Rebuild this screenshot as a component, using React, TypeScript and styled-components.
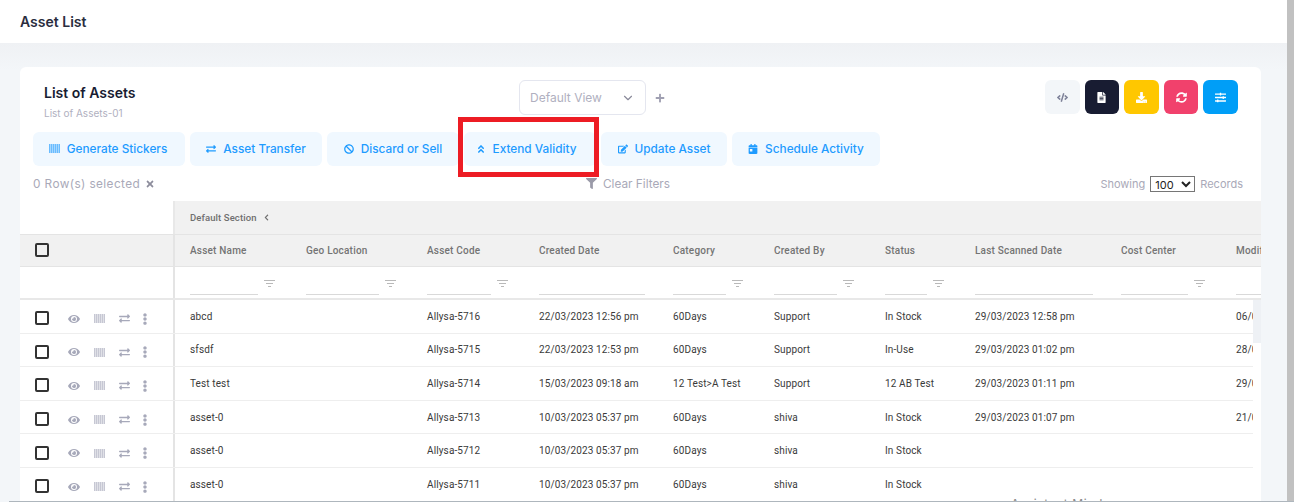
import React from "react";
import styled, { createGlobalStyle } from "styled-components";
import {
  FaExchangeAlt, FaBan, FaAngleDoubleUp, FaEdit, FaCalendarDay, FaEye, FaEllipsisV,
  FaCode, FaFileAlt, FaDownload, FaSyncAlt, FaSlidersH, FaFilter, FaTimes, FaChevronLeft, FaPlus,
} from "react-icons/fa";
import { ChevronDown } from "lucide-react";

const Global = createGlobalStyle`
  html, body { margin: 0; padding: 0; background: #f3f6f9; overflow: hidden; }
  * { box-sizing: border-box; }
`;

const UI_FONT = `"Inter", "Open Sans", sans-serif`;
const TABLE_FONT = `"Roboto", "Liberation Sans", sans-serif`;
const COLS = "154px 116px 121px 112px 134px 101px 111px 90px 146px 115px 100px";

const Page = styled.div`
  width: 1294px; height: 502px; display: flex; overflow: hidden; position: relative;
  font-family: ${UI_FONT};
`;
const Main = styled.div`
  width: 1287px; height: 501px; display: flex; flex-direction: column; overflow: hidden;
  background: linear-gradient(180deg, #eff1f4 43px, #f3f6f9 70px);
`;
const ScrollBar = styled.div`
  width: 7px; height: 501px; background: #c1c1c1;
`;
const BottomLine = styled.div`
  position: absolute; left: 9px; right: 0; bottom: 0; height: 1px; background: #aeb6bd;
`;
const FooterGhost = styled.div`
  position: absolute; left: 1011px; top: 496px; font-size: 12px; color: #8a8a8a; white-space: nowrap;
  font-family: ${UI_FONT}; letter-spacing: .6px;
`;
const TopBar = styled.header`
  flex: 0 0 43px; background: #fff; display: flex; align-items: center; padding: 0 20px 1px;
  font-size: 14px; font-weight: 600; color: #2a2d3e;
`;
const Content = styled.div`
  flex: 1; padding: 24px 26px 0 20px; min-height: 0;
`;
const Card = styled.section`
  background: #fff; border-radius: 6px 6px 0 0; height: 100%; display: flex; flex-direction: column; overflow: hidden;
`;
const CardHead = styled.div`
  display: flex; align-items: flex-start; padding: 13px 23px 0 24px; height: 65px;
`;
const TitleBlock = styled.div`
  width: 475px; padding-top: 4px;
`;
const Title = styled.div`
  font-size: 14px; font-weight: 600; color: #181c32; line-height: 18px;
`;
const Subtitle = styled.div`
  font-size: 10px; color: #b0b0c0; line-height: 12px; margin-top: 5px;
`;
const ViewSelect = styled.div`
  width: 127px; height: 35px; border: 1px solid #e4e6ef; border-radius: 6px;
  display: flex; align-items: center; justify-content: space-between; padding: 0 10px;
  font-size: 12px; color: #b0b0c0;
`;
const PlusBtn = styled.span`
  margin-left: 9px; height: 35px; display: flex; align-items: center; color: #a0a0b2; font-size: 10px;
`;
const Actions = styled.div`
  margin-left: auto; display: flex; gap: 5px;
`;
const Square = styled.button<{ $bg: string; $fg: string }>`
  width: 34.6px; height: 34px; border: 0; border-radius: 6px; padding: 0;
  background: ${(p) => p.$bg}; color: ${(p) => p.$fg};
  display: flex; align-items: center; justify-content: center; font-size: 11px;
`;
const Toolbar = styled.div`
  display: flex; gap: 5px; padding-left: 13px; height: 34px; flex: 0 0 34px;
`;
const ToolButton = styled.button<{ $w: number; $nudge?: number }>`
  position: relative; width: ${(p) => p.$w}px; height: 34px; border: 0; border-radius: 6px;
  background: #f0f8ff; color: #1e9bff; font-family: ${UI_FONT}; font-size: 11.8px; font-weight: 500;
  display: flex; align-items: center; justify-content: center; gap: 7px;
  padding: 0 ${(p) => p.$nudge ?? 0}px 0 0; white-space: nowrap;
  svg { font-size: 10px; flex: none; }
`;
const Highlight = styled.span`
  position: absolute; left: -6px; top: -15px; width: 141px; height: 60px; border: 5px solid #ed1c24;
  pointer-events: none;
`;
const StatusRow = styled.div`
  display: grid; grid-template-columns: 553px 1fr auto; align-items: center;
  padding: 0 18px 0 13px; height: 35px; flex: 0 0 35px; font-size: 11.8px; color: #a9a9b8;
`;
const Selected = styled.div`
  display: flex; align-items: center; gap: 5px; letter-spacing: .4px;
  svg { font-size: 10px; color: #8d8d9c; }
`;
const ClearFilters = styled.div`
  display: flex; align-items: center; gap: 6px;
  svg { font-size: 11px; color: #9a9aa8; }
`;
const Showing = styled.div`
  display: flex; align-items: center; gap: 5px; font-size: 11px;
`;
const Native = styled.select`
  width: 45px; height: 16px; font-family: ${UI_FONT}; font-size: 11px; color: #222; background: #fff;
  border: 1px solid #767676; padding: 0; border-radius: 0;
`;
const Table = styled.div`
  flex: 1; min-height: 0; display: flex; flex-direction: column; font-family: ${TABLE_FONT}; overflow: hidden;
`;
const SectionRow = styled.div`
  display: flex; height: 33px; flex: none;
`;
const SectionBlank = styled.div`
  width: 155px; border-right: 2px solid #e8e8e8;
`;
const SectionCell = styled.div`
  flex: 1; background: #f1f1f1; display: flex; align-items: center; gap: 6px; padding-left: 15px;
  font-size: 9.5px; font-weight: 500; color: #6f6f6f; letter-spacing: .1px;
  svg { font-size: 7px; }
`;
const HeadRow = styled.div`
  display: grid; grid-template-columns: ${COLS}; height: 33px; flex: none; background: #f1f1f1;
  border-top: 1px solid #e4e4e4; border-bottom: 1px solid #e4e4e4; overflow: hidden;
`;
const HeadCell = styled.div`
  display: flex; align-items: center; padding-left: 16px; font-size: 10px; font-weight: 500;
  color: #747474; letter-spacing: .2px; white-space: nowrap; overflow: hidden;
`;
const LeadCell = styled.div`
  width: 155px; display: flex; align-items: center; padding-left: 15px; border-right: 2px solid #e4e4e4; gap: 19px;
`;
const Check = styled.span`
  width: 14px; height: 14px; border: 2px solid #333; border-radius: 2px; flex: none; background: #fff;
`;
const HeadCheck = styled(Check)`
  background: transparent; margin-top: -2px;
`;
const FilterRow = styled.div`
  display: grid; grid-template-columns: ${COLS}; height: 33px; flex: none; overflow: hidden;
  border-bottom: 2px solid #e8e8e8;
`;
const FilterCell = styled.div`
  display: flex; align-items: flex-start; gap: 6px; padding: 0 12px 0 16px; overflow: hidden;
`;
const FilterInput = styled.div`
  flex: 1; height: 28px; border-bottom: 1px solid #d9d9d9;
`;
const FilterIcon = styled.svg`
  width: 11px; height: 8px; flex: none; margin-top: 13px; margin-right: 3px;
`;
const Body = styled.div`
  flex: 1; min-height: 0; display: flex;
`;
const Rows = styled.div`
  width: 1233px; overflow: hidden;
`;
const Track = styled.div`
  width: 8px;
`;
const Thumb = styled.div`
  height: 43px; background: #eef1f5;
`;
const Row = styled.div`
  display: grid; grid-template-columns: ${COLS}; height: 33.6px; border-bottom: 1px solid #eeeeee; overflow: hidden;
`;
const Cell = styled.div`
  display: flex; align-items: center; padding: 0 0 0 16px; font-size: 10px; color: #3a3a3a;
  white-space: nowrap; overflow: hidden; letter-spacing: .12px;
`;
const RowIcons = styled.div`
  display: flex; align-items: center; color: #a7a9ba; margin-top: 1px;
`;
const RowIcon = styled.span<{ $w: number; $s?: number }>`
  width: ${(p) => p.$w}px; display: flex; align-items: center; justify-content: flex-start;
  font-size: ${(p) => p.$s ?? 12}px;
`;
const RowLead = styled(LeadCell)`
  padding-top: 4px;
`;

const Barcode = ({ size = 11, color = "currentColor" }: { size?: number; color?: string }) => (
  <svg width={size} height={size * 0.82} viewBox="0 0 11 9" fill={color} style={{ display: "block" }}>
    <rect x="0" y="0" width="11" height="9" opacity=".35" />
    {[0, 2, 4, 6, 8, 10].map((x) => (
      <rect key={x} x={x} y="0" width="1" height="9" opacity=".45" />
    ))}
  </svg>
);

const FilterGlyph = () => (
  <FilterIcon viewBox="0 0 11 8" fill="none" stroke="#b9b9b9" strokeWidth="1">
    <path d="M0 .5h11M2 3.5h7M4 6.5h3" />
  </FilterIcon>
);

const HEAD = ["Asset Name", "Geo Location", "Asset Code", "Created Date", "Category", "Created By", "Status", "Last Scanned Date", "Cost Center", "Modified Date"];
const HAS_FILTER = [true, true, true, false, true, true, true, false, true, false];

const DATA = [
  ["abcd", "", "Allysa-5716", "22/03/2023 12:56 pm", "60Days", "Support", "In Stock", "29/03/2023 12:58 pm", "", "06/04/2023"],
  ["sfsdf", "", "Allysa-5715", "22/03/2023 12:53 pm", "60Days", "Support", "In-Use", "29/03/2023 01:02 pm", "", "28/03/2023"],
  ["Test test", "", "Allysa-5714", "15/03/2023 09:18 am", "12 Test>A Test", "Support", "12 AB Test", "29/03/2023 01:11 pm", "", "29/03/2023"],
  ["asset-0", "", "Allysa-5713", "10/03/2023 05:37 pm", "60Days", "shiva", "In Stock", "29/03/2023 01:07 pm", "", "21/03/2023"],
  ["asset-0", "", "Allysa-5712", "10/03/2023 05:37 pm", "60Days", "shiva", "In Stock", "", "", ""],
  ["asset-0", "", "Allysa-5711", "10/03/2023 05:37 pm", "60Days", "shiva", "In Stock", "", "", ""],
];

export default function App() {
  return (
    <Page>
      <Global />
      <Main>
        <TopBar>Asset List</TopBar>
        <Content>
          <Card>
            <CardHead>
              <TitleBlock>
                <Title>List of Assets</Title>
                <Subtitle>List of Assets-01</Subtitle>
              </TitleBlock>
              <ViewSelect>
                Default View
                <ChevronDown size={14} color="#8a8a9a" />
              </ViewSelect>
              <PlusBtn><FaPlus /></PlusBtn>
              <Actions>
                <Square $bg="#f3f6f9" $fg="#7e8299"><FaCode /></Square>
                <Square $bg="#181c32" $fg="#fff"><FaFileAlt /></Square>
                <Square $bg="#ffc700" $fg="#fff"><FaDownload /></Square>
                <Square $bg="#f1416c" $fg="#fff"><FaSyncAlt /></Square>
                <Square $bg="#009ef7" $fg="#fff"><FaSlidersH /></Square>
              </Actions>
            </CardHead>
            <Toolbar>
              <ToolButton $w={152} $nudge={2}><Barcode size={11} />Generate Stickers</ToolButton>
              <ToolButton $w={132}><FaExchangeAlt />Asset Transfer</ToolButton>
              <ToolButton $w={132}><FaBan />Discard or Sell</ToolButton>
              <ToolButton $w={132} $nudge={8}><FaAngleDoubleUp />Extend Validity<Highlight /></ToolButton>
              <ToolButton $w={126}><FaEdit />Update Asset</ToolButton>
              <ToolButton $w={148}><FaCalendarDay />Schedule Activity</ToolButton>
            </Toolbar>
            <StatusRow>
              <Selected>0 Row(s) selected <FaTimes /></Selected>
              <ClearFilters><FaFilter />Clear Filters</ClearFilters>
              <Showing>
                Showing
                <Native defaultValue="100"><option>100</option><option>50</option></Native>
                Records
              </Showing>
            </StatusRow>
            <Table>
              <SectionRow>
                <SectionBlank />
                <SectionCell>Default Section <FaChevronLeft /></SectionCell>
              </SectionRow>
              <HeadRow>
                <LeadCell><HeadCheck /></LeadCell>
                {HEAD.map((h) => <HeadCell key={h}>{h}</HeadCell>)}
              </HeadRow>
              <FilterRow>
                <LeadCell />
                {HEAD.map((h, i) => (
                  <FilterCell key={h}>
                    <FilterInput />
                    {HAS_FILTER[i] && <FilterGlyph />}
                  </FilterCell>
                ))}
              </FilterRow>
              <Body>
                <Rows>
                  {DATA.map((r, i) => (
                    <Row key={i}>
                      <RowLead>
                        <Check />
                        <RowIcons>
                          <RowIcon $w={26}><FaEye /></RowIcon>
                          <RowIcon $w={25}><Barcode size={11} /></RowIcon>
                          <RowIcon $w={23} $s={11}><FaExchangeAlt /></RowIcon>
                          <RowIcon $w={6}><FaEllipsisV /></RowIcon>
                        </RowIcons>
                      </RowLead>
                      {r.map((c, j) => <Cell key={j}>{c}</Cell>)}
                    </Row>
                  ))}
                </Rows>
                <Track><Thumb /></Track>
              </Body>
            </Table>
          </Card>
        </Content>
      </Main>
      <ScrollBar />
      <FooterGhost>Assistant Mind</FooterGhost>
      <BottomLine />
    </Page>
  );
}
